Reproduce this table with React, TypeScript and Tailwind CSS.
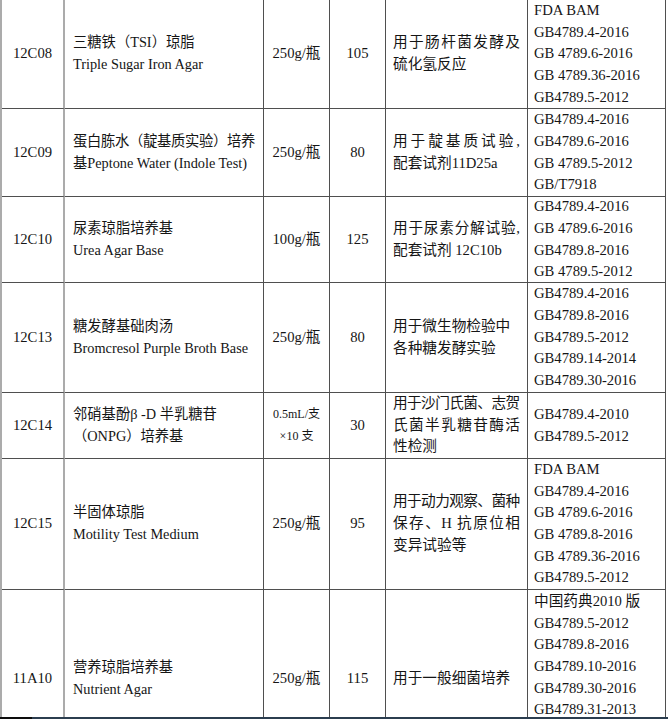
import React from "react";

type Line = string | { t: string; j?: boolean; tight?: boolean };

interface Row {
  code: string;
  name: Line[];
  spec: string[];
  specSmall?: boolean;
  price: string;
  use: Line[];
  std: string[];
  stdTop?: boolean;
}

const rows: Row[] = [
  {
    code: "12C08",
    name: ["三糖铁（TSI）琼脂", "Triple Sugar Iron Agar"],
    spec: ["250g/瓶"],
    price: "105",
    use: [{ t: "用于肠杆菌发酵及", j: true }, "硫化氢反应"],
    std: ["FDA BAM", "GB4789.4-2016", "GB 4789.6-2016", "GB 4789.36-2016", "GB4789.5-2012"],
  },
  {
    code: "12C09",
    name: [{ t: "蛋白胨水（靛基质实验）培养", j: true, tight: true }, "基Peptone Water (Indole Test)"],
    spec: ["250g/瓶"],
    price: "80",
    use: [{ t: "用于靛基质试验,", j: true }, "配套试剂11D25a"],
    std: ["GB4789.4-2016", "GB4789.6-2016", "GB 4789.5-2012", "GB/T7918"],
  },
  {
    code: "12C10",
    name: ["尿素琼脂培养基", "Urea Agar Base"],
    spec: ["100g/瓶"],
    price: "125",
    use: [{ t: "用于尿素分解试验,", j: true }, "配套试剂 12C10b"],
    std: ["GB4789.4-2016", "GB 4789.6-2016", "GB4789.8-2016", "GB 4789.5-2012"],
  },
  {
    code: "12C13",
    name: ["糖发酵基础肉汤", "Bromcresol Purple Broth Base"],
    spec: ["250g/瓶"],
    price: "80",
    use: ["用于微生物检验中", "各种糖发酵实验"],
    std: ["GB4789.4-2016", "GB4789.8-2016", "GB4789.5-2012", "GB4789.14-2014", "GB4789.30-2016"],
  },
  {
    code: "12C14",
    name: ["邻硝基酚β -D 半乳糖苷", "（ONPG）培养基"],
    spec: ["0.5mL/支", "×10 支"],
    specSmall: true,
    price: "30",
    use: [{ t: "用于沙门氏菌、志贺", tight: true }, { t: "氏菌半乳糖苷酶活", j: true }, "性检测"],
    std: ["GB4789.4-2010", "GB4789.5-2012"],
  },
  {
    code: "12C15",
    name: ["半固体琼脂", "Motility Test Medium"],
    spec: ["250g/瓶"],
    price: "95",
    use: [{ t: "用于动力观察、菌种", tight: true }, { t: "保存、H 抗原位相", j: true }, "变异试验等"],
    std: ["FDA BAM", "GB4789.4-2016", "GB 4789.6-2016", "GB 4789.8-2016", "GB 4789.36-2016", "GB4789.5-2012"],
  },
  {
    code: "11A10",
    name: ["营养琼脂培养基", "Nutrient Agar"],
    spec: ["250g/瓶"],
    price: "115",
    use: ["用于一般细菌培养"],
    std: ["中国药典2010 版", "GB4789.5-2012", "GB4789.8-2016", "GB4789.10-2016", "GB4789.30-2016", "GB4789.31-2013"],
    stdTop: true,
  },
];

function TextLine({ line }: { line: Line }) {
  if (typeof line === "string") {
    return <div className="whitespace-nowrap">{line}</div>;
  }
  const cls = line.j
    ? line.tight
      ? "whitespace-nowrap text-justify [text-align-last:justify] tracking-[-0.3px]"
      : "whitespace-nowrap text-justify [text-align-last:justify]"
    : line.tight
    ? "whitespace-nowrap tracking-[-0.6px]"
    : "whitespace-nowrap";
  return <div className={cls}>{line.t}</div>;
}

const cellBase = "border-b border-r border-[#4f4f4f] flex flex-col overflow-hidden";

export default function App() {
  return (
    <div className="w-[668px] h-[719px] overflow-hidden bg-white text-[#151515] text-[14.67px] leading-[21.67px] font-['Liberation_Serif','Noto_Sans_CJK_SC',serif]">
      <div className="h-[717px] overflow-hidden">
        <div className="w-[666px] border-l-2 border-[#ababab] grid grid-cols-[63px_199px_66px_56px_142px_138px] grid-rows-[109px_88px_86px_110px_66px_131px_178px]">
          {rows.map((r) => (
            <React.Fragment key={r.code}>
              <div className="border-b border-[#4f4f4f] border-r-2 border-r-[#ababab] flex items-center justify-center overflow-hidden">
                {r.code}
              </div>
              <div className={`${cellBase} justify-center pl-2 pr-2 text-[14.3px]`}>
                {r.name.map((l, i) => (
                  <TextLine key={i} line={l} />
                ))}
              </div>
              <div
                className={
                  r.specSmall
                    ? `${cellBase} justify-center items-center text-[12px]`
                    : `${cellBase} justify-center items-center`
                }
              >
                {r.spec.map((s, i) => (
                  <div key={i} className="whitespace-nowrap">
                    {s}
                  </div>
                ))}
              </div>
              <div className={`${cellBase} justify-center items-center`}>{r.price}</div>
              <div className={`${cellBase} justify-center pl-[7px] pr-[7px]`}>
                {r.use.map((l, i) => (
                  <TextLine key={i} line={l} />
                ))}
              </div>
              <div
                className={
                  r.stdTop
                    ? `${cellBase} justify-start pl-[6px] pt-[1px]`
                    : `${cellBase} justify-center pl-[6px]`
                }
              >
                {r.std.map((s, i) => (
                  <div key={i} className="whitespace-nowrap">
                    {s}
                  </div>
                ))}
              </div>
            </React.Fragment>
          ))}
        </div>
      </div>
      <div className="h-[2px] flex">
        <div className="w-[32px] bg-[#0d0d0d]" />
        <div className="flex-1 bg-[#2b3d4f]" />
      </div>
    </div>
  );
}
